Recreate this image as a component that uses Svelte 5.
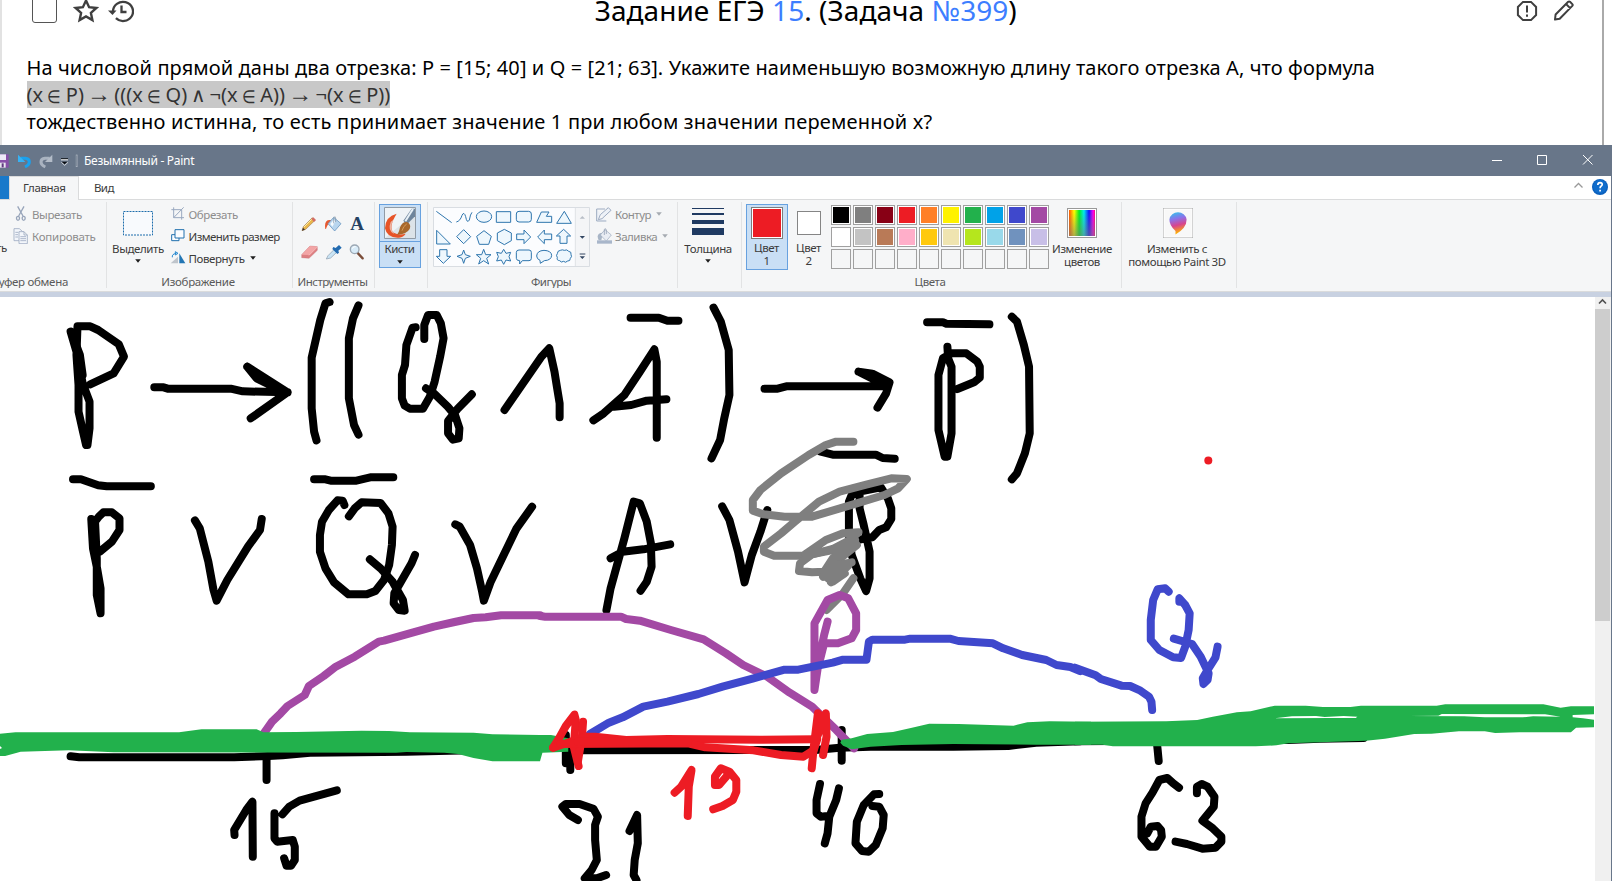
<script>
  const palette = [
    '#000000', '#7f7f7f', '#880015', '#ed1c24', '#ff7f27', '#fff200', '#22b14c', '#00a2e8', '#3f48cc', '#a349a4',
    '#ffffff', '#c3c3c3', '#b97a57', '#ffaec9', '#ffc90e', '#efe4b0', '#b5e61d', '#99d9ea', '#7092be', '#c8bfe7',
    null, null, null, null, null, null, null, null, null, null
  ];

  // Vertical bands of the drawing; each holds strokes in its own enlarged units.
  const at = (x, y) => `translate(${x} ${y}) scale(.34439 .33333)`;

  const formula = [
    'M205 110L222 170L240 265L260 320L260 400L254 450L250 450L240 405L228 350L228 270L222 180L225 94L262 94L285 105L345 148L360 185L330 235L262 268',
    'M212 125L232 180L240 240',
    'M448 277L475 277L487 281L670 281L705 289L835 292M718 215L745 233L835 292L728 370M718 215L745 250L800 278',
    'M957 21L945 25L930 75L905 188L905 340L912 410L919 436',
    'M1041 31L1025 70L1013 130L1013 310L1028 390L1041 419',
    'M1207 97L1198 98L1180 150L1176 210L1167 240L1167 310L1175 332L1190 341L1228 341L1248 305L1262 260L1278 185L1288 130L1280 85L1268 60L1243 60L1232 90L1232 132',
    'M1237 280L1260 295L1300 335L1322 362L1334 400L1332 430L1315 434L1301 415L1301 378L1330 340L1370 298',
    'M1465 345L1572 185L1595 160L1610 230L1617 275L1625 325L1625 367',
    'M212 553L235 553L285 571L310 574L438 574',
    'M912 553L945 553L960 557L1035 557L1075 547L1142 547',
    'M265 672L270 760L282 820L292 880L292 955L281 900L281 790L276 680L287 665L300 652L325 652L347 670L347 705L325 740L290 770',
    'M566 676L580 700L605 800L620 885L629 917L660 855L720 755L755 705L760 672',
    'M1000 630L995 617L980 616L955 645L935 680L929 720L929 770L945 820L970 862L1012 898L1065 898L1090 888L1115 855L1130 810L1138 750L1140 695L1128 655L1105 624L1050 622L1030 640L1013 664',
    'M1074 793L1105 820L1140 860L1170 915L1175 947L1158 945L1143 925L1145 895L1170 850L1195 805L1205 780',
    'M1322 688L1335 695L1365 750L1385 820L1400 890L1405 917L1425 860L1460 785L1500 700L1545 635'
  ];
  const formulaRight = [
    'M263 68L345 68L370 77L402 77',
    'M155 376L185 355L245 300L290 230L332 163L339 200L339 428M215 335L265 330L310 317L367 313',
    'M504 38L525 80L548 165L550 300L535 370L523 435L498 490',
    'M652 281L690 281L715 274L1010 274M925 230L965 236L1015 262L1005 295L980 338M925 230L1010 274',
    'M1124 82L1170 82L1180 86L1305 88',
    'M1183 155L1185 190L1195 215L1195 415L1183 485L1175 485L1157 405L1157 240L1170 190L1195 175L1238 175L1270 200L1277 215L1277 248L1260 262L1212 282',
    'M1370 65L1385 80L1405 150L1420 215L1422 415L1408 475L1385 535L1370 553',
    'M193 945L205 880L245 730L272 620L290 625L310 680L322 745L324 815L310 860L292 887M205 790L240 770L300 763L378 748',
    'M529 634L550 675L575 770L594 862L615 780L640 710L660 645',
    'M815 470L850 479L975 479L995 489L1030 491',
    'M930 590L905 600L897 620L897 720L905 780L930 850L947 888L957 850L957 770L940 690L928 640L928 590L990 577L1010 610L1020 640L1020 672L1005 697L985 705L965 727L920 735'
  ];
  const grey = [
    'M910 440L860 440L830 450L780 480L700 535L640 585L618 615L618 647L650 658L710 665L790 665L910 628L1000 600L1040 580L1065 552L1020 550L950 568L870 590L810 620L740 680L700 715L650 755L650 770L680 782L770 782L850 765L915 740',
    'M770 778L830 735L880 715L925 712L900 735L850 762L790 778L755 805L752 828L790 832L825 830L850 790L915 735L870 790L835 820L920 750',
    'M822 845L850 812L905 802L840 835L895 812L845 862L885 835L850 860L830 845',
    'M910 850L880 895L832 945'
  ];
  const ticks = [
    'M75 495L75 580M88 540L88 600',
    'M876 480L876 572',
    'M110 750L85 735L65 710L75 702L115 702L155 716L168 740L160 765L160 810L165 870L150 900L130 925L165 925L192 915',
    'M260 783L282 735L284 820L275 870L272 915L280 930',
    'M813 642L803 690L803 730L815 740L835 738M868 655L860 690L840 740L835 790L827 820',
    'M985 672L970 673L940 705L920 755L916 820L935 843L955 845L975 825L995 775L998 735L985 710L965 708',
    'M80 541L800 540L870 533L960 530L1200 530L1360 528L1440 518L1568 514'
  ];
  const leftNumbers = [
    'M205 469L230 472L680 472L780 468L820 466L900 458L1180 455L1400 450',
    'M774 470L774 540',
    'M681 705L680 690L715 630L733 605L734 770',
    'M797 640L797 715L805 725L850 720L856 740L856 780L845 797L832 797L825 775M820 643L840 620L870 602L978 571'
  ];
  const rightNumbers = [
    'M0 514L620 510L710 506L838 504',
    'M238 520L240 540L243 573',
    'M302 653L285 640L268 624L245 630L225 668L205 700L193 740L193 800L217 830L235 830L252 800L250 780L240 768L220 770L210 790',
    'M354 670L354 650L368 642L385 650L405 680L403 710L370 752L400 775L425 800L425 815L408 833L370 836L325 822L292 815'
  ];
  const red = [
    'M112 588L98 530L104 450L100 434L75 468L55 505L38 533',
    'M125 455L122 500L110 575',
    'M38 533L80 518L130 500L160 500L250 510L370 507L640 509L800 508',
    'M60 522L430 520L480 532L620 541L700 555L765 560L795 540L805 508',
    'M110 515L430 514',
    'M789 595L795 530L807 430L815 440L805 500L830 430L832 500L822 555',
    'M391 668L410 650L440 600L432 650L429 738',
    'M545 615L520 645L508 645L508 620L525 595L550 605L570 630L570 665L560 690L530 708L503 718'
  ];
</script>

{#snippet down(c = '#1e1e1e')}
  <svg class="down" width="6" height="4" viewBox="0 0 6 4"><path d="M.2 .3h5.6L3 3.7z" fill={c} /></svg>
{/snippet}

<main>
  <section class="task">
    <header>
      <div class="tools">
        <span class="check"></span>
        <svg width="26" height="26" viewBox="0 0 26 26" fill="none" stroke="#3f3f3f" stroke-width="2.4"><path d="M13 2.6l3.1 6.6 7.2.8-5.4 4.9 1.5 7.2-6.4-3.7-6.4 3.7 1.5-7.2L2.700 10l7.200-.8z" /></svg>
        <svg class="history" width="26" height="24" viewBox="0 0 26 24" fill="none" stroke="#3f3f3f" stroke-width="2.3"><path d="M5 12.500a10 9.600 0 1 1 2.900 6.700M13.500 6.500v6.500h5" /><path d="M0 11.500h8.500L4.500 16z" fill="#3f3f3f" stroke="none" /></svg>
      </div>
      <h1>Задание ЕГЭ <a href="#15">15</a>. (Задача <a href="#399">№399</a>)</h1>
      <div class="tools end">
        <svg width="22" height="22" viewBox="0 0 22 22" fill="none" stroke="#3f3f3f" stroke-width="2"><path d="M7 1.900h8l5.100 5.100v8L15 20.100H7L1.900 15V7z" /><path d="M11 5.500v7M11 14.500v2.200" /></svg>
        <svg width="20" height="21" viewBox="0 0 20 21" fill="none" stroke="#3f3f3f" stroke-width="2" stroke-linejoin="round"><path d="M1 19.500l.6-5L14.200 1.800q.9-.7 1.800 0l2.300 2.300q.8.9 0 1.800L5.700 18.800zM12 4l4.400 4.400" /></svg>
      </div>
    </header>
    <p class="l1">На числовой прямой даны два отрезка: P = [15; 40] и Q = [21; 63]. Укажите наименьшую возможную длину такого отрезка A, что формула</p>
    <p class="l2"><mark>(x <b class="in">∈</b> P) <b class="to">→</b> (((x <b class="in">∈</b> Q) <b class="and">∧</b> ¬(x <b class="in">∈</b> A)) <b class="to">→</b> ¬(x <b class="in">∈</b> P))</mark></p>
    <p class="l3">тождественно истинна, то есть принимает значение 1 при любом значении переменной x?</p>
  </section>

  <section class="window">
    <div class="titlebar">
      <svg width="78" height="31" viewBox="0 15 234 93">
        <path d="M-20 43H26V83H-20z" fill="#8850a8" /><path d="M-10 43H18V60H-10z" fill="#eee9f6" /><path d="M-8 68H17V83H-8z" fill="#e8e6ee" /><path d="M5 70h6v12H5z" fill="#5e387e" />
        <path d="M62 55h14q12 1 12 11 0 9-13 15" fill="none" stroke="#1ba1ee" stroke-width="9" /><path d="M54 44v22h22z" fill="#36b2f5" />
        <path d="M149 55h-14q-12 1-12 11 0 9 13 15" fill="none" stroke="#a9b3c0" stroke-width="9" /><path d="M157 44v22h-22z" fill="#b3bcc8" />
        <path d="M183 57h21v4H183z" fill="#fff" /><path d="M183 55h21v3H183zM185 65h17l-8.500 8z" fill="#090c10" /><path d="M184 67l10 9 10-9" fill="none" stroke="#fff" stroke-width="2" />
        <path d="M230 44V81" stroke="#b8bfc9" stroke-width="5" /><path d="M230 46V79" stroke="#59667a" stroke-width="2" />
      </svg>
      <span class="title">Безымянный - Paint</span>
      <svg class="controls" width="115" height="31" viewBox="0 0 115 31" fill="none" stroke="#fff"><path d="M0 15.500h10M45.500 10.500h9v9h-9zM91 10l9.500 9.500M100.500 10L91 19.500" /></svg>
    </div>

    <div class="tabs">
      <span class="file"></span>
      <span class="tab active">Главная</span>
      <span class="tab view">Вид</span>
      <svg class="help" width="36" height="20" viewBox="0 0 36 20"><path d="M2.500 10.500l4-4 4 4" fill="none" stroke="#999" stroke-width="1.300" /><circle cx="28" cy="10" r="8" fill="#0b60bd" /><circle cx="28" cy="9.500" r="6.800" fill="#106dcc" /><path d="M25.800 8q.1-2.300 2.300-2.300 2.100.1 2.100 1.900 0 1-1.200 1.700-.9.600-.9 1.900M28.100 12.800v1.800" fill="none" stroke="#fff" stroke-width="1.700" /></svg>
    </div>

    <div class="ribbon">
      <div class="group clipboard">
        <div class="body">
          <span class="paste">Вставить</span>
          <div class="list off">
            <span><svg width="16" height="16" viewBox="38 201 48 48" fill="none" stroke="#98a5ba" stroke-width="4"><path d="M52 202l16 29M71 202L55 231" /><ellipse cx="53" cy="238" rx="4.500" ry="6" /><ellipse cx="70" cy="238" rx="4.500" ry="6" /></svg><em class="s-cut">Вырезать</em></span>
            <span><svg width="16" height="16" viewBox="38 267 48 48" fill="#f3f6fb" stroke="#9dabc1" stroke-width="2.500"><path d="M41 269h16l10 9v27H41z" /><path d="M56 278h15l10 10v26H56zM71 278v10h10M60 293h17M60 299h17M60 305h17M45 280h9M45 287h8M45 294h8" /></svg><em class="s-copy">Копировать</em></span>
          </div>
        </div>
        <div class="label buffer">Буфер обмена</div>
      </div>

      <div class="group image">
        <div class="body">
          <div class="big select">
            <svg width="32" height="26" viewBox="0 0 32 26"><path d="M1.500 1.500h29v23.500h-29z" fill="#f8fafd" stroke="#1c6dac" stroke-dasharray="2 1" /></svg>
            <span>Выделить</span>{@render down()}
          </div>
          <div class="list">
            <span class="dis"><svg width="14" height="14" viewBox="512 205 42 42" fill="none" stroke="#9aa9c0" stroke-width="3"><path d="M513 213h31v30M520 206v31h31M520 237l30-31" /></svg><em>Обрезать</em></span>
            <span><svg width="14" height="14" viewBox="512 271 42 42" fill="#fafcff" stroke="#2070ae" stroke-width="3"><path d="M514 288h22v18h-22z" /><path d="M524 273h27v25h-27z" /></svg><em class="s-size">Изменить размер</em></span>
            <span><svg width="16" height="14" viewBox="508 337 48 42"><path d="M510 374l22-20v20z" fill="#bfc5cc" /><path d="M536 344v30h18z" fill="#2376b4" /><path d="M515 356q-2-10 12-12M524 339l8 5-8 5z" fill="none" stroke="#2589d0" stroke-width="3" /></svg><em>Повернуть</em>{@render down()}</span>
          </div>
        </div>
        <div class="label pic">Изображение</div>
      </div>

      <div class="group instruments">
        <div class="body tool-grid">
          <svg viewBox="901 227 54 48"><path d="M907 271l4-12 27-27 8 8-28 27z" fill="#e9b64c" stroke="#8b6332" stroke-width="1.500" /><path d="M907 271l3-9 6 6z" fill="#3c3430" /><path d="M935 236l6-5 8 8-6 6z" fill="#d36c64" /><path d="M913 260l23-23" stroke="#fff0a5" stroke-width="3" /></svg>
          <svg viewBox="972 227 54 48"><path d="M976 266q-5-30 17-27l-2 8q-9 4-13 19z" fill="#e75930" /><path d="M984 250l17-19 22 19-19 22z" fill="#b8d5ee" stroke="#5789b8" stroke-width="2" /><path d="M991 251l10-13 5 5-9 16z" fill="#f4faff" /><path d="M1001 249v-16q4-8 6 0v12" fill="none" stroke="#7c8c9d" stroke-width="2" /></svg>
          <span class="letter">A</span>
          <svg viewBox="901 311 54 48"><path d="M906 343l25-26 22 2v11l-25 24-22-2z" fill="#dd7f82" stroke="#bd6569" /><path d="M906 343l25-26 22 2-24 25z" fill="#f2a5a6" /><path d="M928 345l25-25" stroke="#ffd0ce" stroke-width="2" /></svg>
          <svg viewBox="972 311 54 48"><path d="M979 356l5-10 20-20 8 8-20 19z" fill="#c9e4f5" stroke="#8799ab" stroke-width="2" /><path d="M1000 320l7 3 10-9 8 8-10 9 2 6-5 4-15-15z" fill="#236bb0" /></svg>
          <svg viewBox="1042 311 54 48"><path d="M1070 337l16 17" stroke="#7b4d39" stroke-width="7" stroke-linecap="round" /><circle cx="1062" cy="327" r="13" fill="#d8ebf8" stroke="#9ba7b3" stroke-width="4" /><path d="M1055 325q2-7 10-6" fill="none" stroke="#fff" stroke-width="3" /></svg>
        </div>
        <div class="label tight">Инструменты</div>
      </div>

      <div class="group brushes">
        <div class="body">
          <div class="brush">
            <svg width="32" height="32" viewBox="1152 201 96 96"><path d="M1153.500 202.500h93v93h-93z" fill="#eff3f6" stroke="#909ba6" stroke-width="3" /><path d="M1155 294l90-75v75z" fill="#dce3e8" /><path d="M1190 221q-34 8-35 44 6 30 42 28 14-2 20-12-20 6-36-3-17-15 9-57z" fill="#e75427" /><path d="M1172 246q-10 26 10 36l-4-8q-12-10 4-36z" fill="#eff3f6" opacity=".6" /><path d="M1210 242l25-36h10v23l-25 25z" fill="#6e859c" /><path d="M1216 244l23-37" stroke="#e7f0f6" stroke-width="6" /><path d="M1191 284q6-6 9-22 8-18 21-16 14 7 8 21-10 17-38 17z" fill="#a8682c" /><path d="M1206 272q4-14 14-20" stroke="#d79d56" stroke-width="3" fill="none" /></svg>
            <span>Кисти</span>{@render down()}
          </div>
        </div>
      </div>

      <div class="group figures">
        <div class="body">
          <svg class="gallery" width="157" height="60" viewBox="189 51 471 180" fill="none" stroke="#2f76ae" stroke-width="3">
            <path d="M190.500 52.500h468v177h-468z" fill="#fbfcfe" stroke="#d9dde2" /><path d="M616 54h41v174h-41z" fill="#f4f5f7" stroke="none" /><path d="M616 54v174" stroke="#dfe2e6" />
            <path d="M199 64l46 34M259 96q12-3 17-20 6-13 11 4 4 22 11 10 3-18 8-23" />
            <g fill="#eef7fd"><ellipse cx="342" cy="80" rx="23" ry="17" /><path d="M379 65h43v32h-43z" /><rect x="439" y="64" width="45" height="32" rx="8" /><path d="M500 97l14-31h23l-8 13h16v18zM560 100l23-36 21 36z" />
              <path d="M200 121v41h41zM281 119l21 21-21 21-21-21zM342 122l22 17-8 24h-28l-8-24zM403 118l21 11v23l-21 12-21-12v-23zM440 132h22v-12l20 21-20 20v-12h-22zM545 132h-22v-12l-20 21 20 20v-12h22zM570 160v-22h-11l22-20 21 20h-11v22z" />
              <path d="M209 179h22v20h11l-22 21-21-21h10zM281 180l5 14 15 5-15 6-5 15-5-15-15-6 15-5zM341 178l6 16h16l-13 11 6 17-15-10-15 10 6-17-13-11h16zM401 178l7 12 14-3-5 13 5 13-14-3-7 13-7-13-14 3 5-13-5-13 14 3z" />
              <path d="M447 180h30q7 0 7 7v18q0 7-7 7h-20l-8 10v-10q-10 0-10-7v-18q0-7 8-7zM510 211q-10-4-10-13 1-16 22-17 22 1 23 15-1 15-22 16l-12 8zM571 181q6-3 12 0 8-4 13 3 9 1 7 9 4 8-2 12 0 9-8 8-7 7-12 1-8 5-12-2-10-1-7-9-5-8 0-12 0-9 9-10z" /></g>
            <path d="M629 86h16l-8-8z" fill="#b8bec7" stroke="none" /><path d="M629 138h16l-8 8zM629 199h16l-8 8z" fill="#344763" stroke="none" /><path d="M629 192h17" stroke="#344763" />
          </svg>
          <div class="list off">
            <span><svg width="16" height="16" viewBox="677 55 48 48" fill="#edf1f7" stroke="#9dabc1" stroke-width="3"><path d="M679 64h25M679 64v36h29M684 96l6-15 24-21 8 8-27 25z" /></svg><em>Контур</em>{@render down('#a6abb2')}</span>
            <span><svg width="16" height="16" viewBox="677 118 48 48"><path d="M680 155h45v10H680z" fill="#a8b6ca" /><path d="M685 155q-10-22 13-23l-5 23z" fill="#a8b5c6" /><path d="M690 139l14-16 19 16-15 18z" fill="#e9edf4" stroke="#99a7bd" stroke-width="2" /><path d="M702 139v-17q4-5 6 2v12" stroke="#8594aa" fill="none" stroke-width="2" /></svg><em>Заливка</em>{@render down('#a6abb2')}</span>
          </div>
        </div>
        <div class="label tight fig">Фигуры</div>
      </div>

      <div class="group weight">
        <div class="body"><div class="big">
          <svg width="32" height="28" viewBox="0 0 32 28" fill="#1f3a62"><path d="M0 1h32v1H0zM0 6h32v2H0zM0 13h32v4H0zM0 21h32v7H0z" /></svg>
          <span>Толщина</span>{@render down()}
        </div></div>
      </div>

      <div class="group colours">
        <div class="body">
          <div class="colour on"><i class="swatch red"></i><span>Цвет</span><span>1</span></div>
          <div class="colour second"><i class="swatch"></i><span>Цвет</span><span>2</span></div>
          <div class="palette">
            {#each palette as c}
              <i class:empty={!c} style:background={c}></i>
            {/each}
          </div>
          <div class="edit">
            <i class="rainbow"></i><span>Изменение</span><span>цветов</span>
          </div>
        </div>
        <div class="label col">Цвета</div>
      </div>

      <div class="group three">
        <div class="body"><div class="edit">
          <svg width="30" height="30" viewBox="0 0 30 30"><defs><linearGradient id="pin" x1="0" y1="0" x2=".2" y2="1"><stop offset="0" stop-color="#28cbed" /><stop offset=".35" stop-color="#8a73ea" /><stop offset=".65" stop-color="#d8448e" /><stop offset="1" stop-color="#ffb300" /></linearGradient></defs><path d="M.5 .5h29v29H.5z" fill="#f8f8f8" stroke="#a7a7a7" /><path d="M1 1h28v28H1z" fill="none" stroke="#fff" /><path d="M12.500 26.500V23Q6.300 17.500 6.400 11.500A8.700 8.500 0 0 1 23.600 11.500Q23.700 20 12.500 26.500z" fill="url(#pin)" /></svg>
          <span>Изменить с</span><span>помощью Paint 3D</span>
        </div></div>
      </div>
    </div>

    <div class="work">
      <svg class="canvas" width="1595" height="584" viewBox="0 297 1595 584">
        <g class="ink black">
          <g transform={at(0, 295)}>{#each formula as d}<path {d} />{/each}</g>
          <g transform={at(540, 295)}>{#each formulaRight as d}<path {d} />{/each}</g>
          <g transform={at(0, 600)}>{#each leftNumbers as d}<path {d} />{/each}</g>
          <g transform={at(540, 570)}>{#each ticks as d}<path {d} />{/each}</g>
          <g transform={at(1075, 570)}>{#each rightNumbers as d}<path {d} />{/each}</g>
        </g>
        <g class="ink grey" transform={at(540, 295)}>{#each grey as d}<path {d} />{/each}</g>
        <g class="ink purple">
          <path transform={at(0, 600)} d="M766 400L790 365L815 340L835 318L885 285L897 258L940 228L975 200L1030 170L1100 125L1115 122L1200 97L1260 80L1320 66L1375 54L1410 52L1455 46L1568 46" />
          <path transform={at(540, 570)} d="M0 138L15 140L235 140L250 147L290 152L380 180L475 208L540 250L590 285L660 320L725 368L790 410L860 480L912 535M835 155L825 195L810 270L797 360L797 160L835 90L870 75L895 85L918 130L918 180L905 205L865 220L825 220L808 290" />
        </g>
        <g class="ink blue">
          <path transform={at(540, 570)} d="M145 492L200 458L240 442L300 410L370 395L460 372L530 350L620 325L710 299L750 299L850 278L880 269L948 269L955 215L965 209L1060 209L1075 206L1190 206L1215 213L1315 220L1345 235L1400 255L1470 270L1500 285L1540 291L1568 303" />
          <path transform={at(1075, 570)} d="M0 293L60 316L75 327L135 347L160 348L190 362L215 380L222 395L224 420M272 65L262 55L240 58L227 90L220 150L220 210L245 240L285 262L308 264L320 230L330 180L333 130L320 105L303 85L303 95M287 206L340 222L365 260L388 310L385 330L373 342L371 325L385 300L408 262L414 230" />
        </g>
        <g class="green">
          <path transform={at(0, 600)} d="M0 401L45 397L520 397L585 388L745 388L765 397L860 396L1050 392L1130 393L1190 397L1375 398L1430 403L1568 405L1600 405L1650 415L1650 455L1575 458L1568 484L1430 484L1375 474L1330 462L1290 458L1180 456L1150 458L330 457L200 451L60 455L15 468L0 468z" />
          <path transform={at(540, 570)} d="M876 509L905 505L950 492L1025 486L1080 473L1130 461L1215 462L1375 467L1415 457L1480 454L1600 455L1600 524L1440 524L1200 522L1050 525L960 530L905 538L880 527L872 518z" />
          <path transform={at(1075, 570)} d="M0 455L265 454L355 450L400 440L470 427L510 424L580 407L670 407L720 411L800 411L830 407L1050 407L1075 403L1360 403L1410 413L1440 409L1507 409L1507 433L1445 435L1445 442L1475 445L1507 449L1507 472L1455 473L1440 487L1290 487L1220 489L1190 484L1115 484L1035 491L985 492L900 506L845 512L620 520L585 526L525 529L110 529L80 524L0 524z" />
          <path transform={at(1075, 570)} fill="#fff" d="M580 445L630 439L700 438L725 441L780 438L820 440L815 444L735 444zM970 438L1055 437L1065 432L1365 433L1410 440L1330 439L1300 442L1190 442L1130 439z" />
          <path d="M0 746v3l2-1z" fill="#fff" />
        </g>
        <g class="ink red" transform={at(540, 570)}>{#each red as d}<path {d} />{/each}</g>
        <circle cx="1208.300" cy="460.500" r="4" fill="#ed1c24" />
      </svg>
      <div class="scroll"><svg width="15" height="12" viewBox="0 0 15 12"><path d="M4 6.500L7.500 3l3.500 3.500" fill="none" stroke="#505050" stroke-width="1.600" /></svg><i></i></div>
    </div>
  </section>
</main>

<style>
  :global(body) { margin: 0; overflow: hidden; background: #fff; }
  * { box-sizing: border-box; }
  main { width: 1615px; height: 881px; overflow: hidden; background: #fff; font-family: 'Noto Sans', sans-serif; }
  svg { display: block; flex: none; }
  .task { width: 1604px; height: 145px; overflow: hidden; border-left: 2px solid #e2e2e2; border-right: 2px solid #aaa; padding-left: 24.500px; color: #000; }
  header { height: 54px; display: grid; grid-template-columns: 300px 1fr 300px; align-items: start; }
  .tools { display: flex; padding: 0 0 0 5.500px; }
  .check { width: 25px; height: 28px; margin-top: -5px; border: 1px solid #555; border-radius: 3px; }
  .tools svg { margin: -2px 0 0 16px; }
  .tools .history { margin: -1px 0 0 9px; }
  .tools.end { justify-content: flex-end; padding-right: 28px; }
  .tools.end svg { margin: 0 0 0 16px; }
  h1 { margin: -9px 0 0; font-size: 28px; line-height: 38px; font-weight: 400; text-align: center; white-space: nowrap; position: relative; left: -8.500px; letter-spacing: .05px; }
  h1 a { color: #3d7eff; text-decoration: none; }
  p { margin: 0; font-size: 20px; line-height: 27px; white-space: nowrap; }
  .l1 { letter-spacing: .103px; }
  .l3 { letter-spacing: .195px; }
  mark { background: #c8c8c8; color: #333; }
  mark b { font-weight: 400; line-height: 0; display: inline-flex; justify-content: center; }
  .in { width: 12.300px; font-size: 16px; transform: scaleY(1.15); }
  .to { width: 20px; font-size: 24px; }
  .and { width: 12px; }
  .window { width: 1612px; height: 736px; border-right: 1px solid #68768a; font-size: 11.500px; letter-spacing: -.4px; color: #3b3b3b; }
  .titlebar { height: 31px; width: 1612px; display: flex; align-items: center; background: #687689; color: #fff; }
  .title { margin-left: 6px; font-size: 12px; letter-spacing: -.28px; }
  .controls { margin-left: auto; margin-right: 5px; }
  .tabs { height: 24px; display: flex; border-bottom: 1px solid #dadbdc; background: #fff; }
  .file { width: 9px; background: #1979ca; height: 23px; }
  .tab { height: 23px; line-height: 23px; padding: 0 15px; }
  .tab.active { width: 70px; padding: 0 0 0 13px; height: 24px; background: #f5f6f7; border: 1px solid #dadbdc; border-width: 1px 1px 0; line-height: 22px; }
  .tab.view { letter-spacing: -.6px; }
  .help { margin: 1px 3px 0 auto; }
  .ribbon { height: 92px; background: #f5f6f7; border-bottom: 1px solid #dadbdc; display: grid; grid-template-columns: 107px 186px 82px 53px 250px 64px 380px 115px; padding-top: 2px; line-height: 13px; }
  .group { height: 86px; border-right: 1px solid #e2e3e4; display: flex; flex-direction: column; overflow: hidden; }
  .body { height: 72px; display: flex; flex: none; position: relative; }
  .label { text-align: center; color: #5a5a5a; line-height: 16px; height: 14px; white-space: nowrap; }
  .label.pic { letter-spacing: -.27px; padding-right: 3px; }
  .label.tight { letter-spacing: -.5px; padding-right: 2px; }
  .label.fig { padding-right: 3px; }
  .label.col { padding-right: 3px; }
  .list { display: flex; flex-direction: column; padding-top: 1px; }
  .list > span { height: 22px; display: flex; align-items: center; white-space: nowrap; }
  .list .down { margin-left: 5px; }
  em { font-style: normal; }
  .s-copy { letter-spacing: -.25px; }
  .s-size { letter-spacing: -.55px; }
  .off, .dis { color: #8d8d8d; }
  .clipboard .paste { width: 7px; padding-top: 39px; display: flex; justify-content: flex-end; }
  .clipboard .list { padding-left: 6px; }
  .clipboard em { margin-left: 3px; }
  .buffer { align-self: flex-start; width: 68px; display: flex; justify-content: flex-end; letter-spacing: -.3px; }
  .big { display: flex; flex-direction: column; align-items: center; }
  .big > svg:first-child { margin-top: 8px; }
  .big span { margin-top: 6px; }
  .big .down { margin-top: 4px; }
  .select { width: 62px; }
  .image .list em { margin-left: 3.500px; }
  .image .list span:last-child svg:first-child { margin-left: -1px; }
  .image .list span:last-child em { margin-left: 2.500px; }
  .image .list { padding-left: 2px; }
  .tool-grid { display: grid; grid-template: 28px 28px / 24px 24px 24px; padding: 8px 0 0 4px; align-items: center; justify-items: center; }
  .tool-grid svg { width: 18px; height: 16px; }
  .letter { font: bold 19px/20px 'Liberation Serif', serif; color: #254263; }
  .brush { width: 42px; height: 64px; margin: 2px 0 0 4px; border: 1px solid #67a1df; background: linear-gradient(#c9dff5 36px, #67a1df 36px 37px, #c9dff5 37px); display: flex; flex-direction: column; align-items: center; }
  .brush > svg:first-child { margin-top: 2px; }
  .brush span { margin: 3px 1px 0 0; letter-spacing: -.5px; }
  .brush .down { margin-top: 5px; }
  .gallery { margin: 5px 0 0 5px; }
  .figures .list { padding-left: 6px; }
  .figures em { margin-left: 3px; letter-spacing: -.5px; }
  .weight .big { width: 60px; }
  .weight .big > svg:first-child { margin-top: 5px; }
  .weight .big span { margin-top: 7px; }
  .colour { width: 42px; height: 66px; margin: 2px 0 0 4px; display: flex; flex-direction: column; align-items: center; border: 1px solid transparent; }
  .colour span { margin-right: 1px; }
  .colour.on { background: #c9dff5; border-color: #67a1df; }
  .swatch { width: 24px; height: 24px; margin: 6px 0 6px; background: #fff; border: 1px solid #858585; }
  .swatch.red { width: 32px; height: 32px; margin: 2px 0 2px; border: 1px solid #7d7d7d; box-shadow: inset 0 0 0 1px #fff; background: #ed1c24; }
  .colour.second { margin-left: 0; }
  .palette { display: grid; grid-template-columns: repeat(10, 20px); grid-auto-rows: 20px; gap: 2px; padding: 3px 0 0 1px; align-content: start; }
  .palette i { border: 1px solid #a0a0a0; box-shadow: inset 0 0 0 1px #fff; }
  .palette .empty { box-shadow: none; }
  .edit { display: flex; flex-direction: column; align-items: center; white-space: nowrap; padding-top: 6px; width: 66px; }
  .edit svg, .rainbow { margin-bottom: 4px; }
  .rainbow { width: 30px; height: 30px; border: 1px solid #999; box-shadow: inset 0 0 0 1px #fff; background: linear-gradient(transparent 10%, #7779), linear-gradient(90deg, #f30, #ff0 22%, #0e2 40%, #0ee 57%, #11f 75%, #f0e 90%, #f03); }
  .three .edit { width: 112px; }
  .three .edit span { margin-right: 2px; }
  .work { display: flex; height: 589px; border-top: 5px solid #c8d1e1; }
  .scroll { width: 16px; background: #f0f0f0; height: 584px; }
  .scroll i { display: block; width: 15px; height: 312px; background: #cdcdcd; }
  .ink { fill: none; stroke-linecap: round; stroke-linejoin: round; stroke-width: 8px; }
  .ink path { vector-effect: non-scaling-stroke; }
  .black { stroke: #000; }
  .grey { stroke: #7f7f7f; }
  .purple { stroke: #a349a4; }
  .blue { stroke: #3f48cc; }
  .red { stroke: #ed1c24; }
  .green { fill: #22b14c; }
</style>
